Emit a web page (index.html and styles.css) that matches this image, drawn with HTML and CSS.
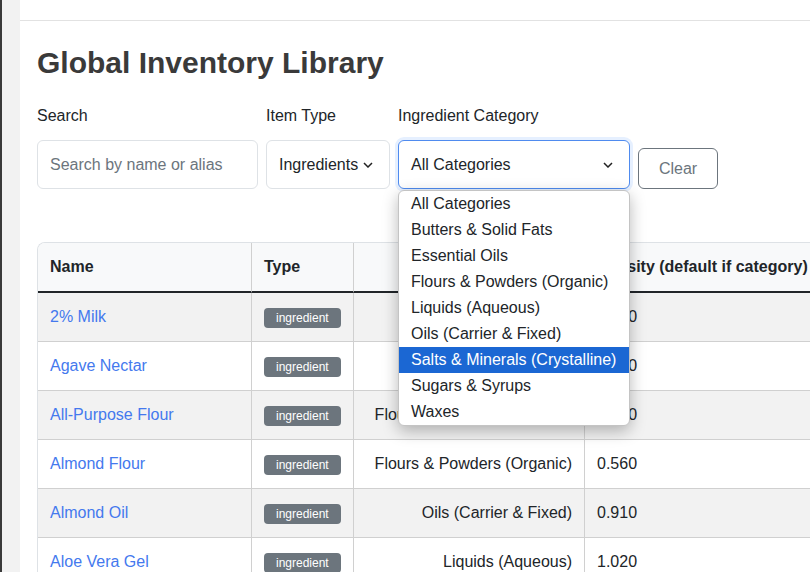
FILE: index.html
```html
<!DOCTYPE html>
<html lang="en">
<head>
<meta charset="utf-8">
<title>Global Inventory Library</title>
<link rel="stylesheet" href="styles.css">
</head>
<body>
<div class="app">
  <aside class="rail"></aside>
  <div class="main">
    <div class="topbar"></div>
    <div class="content">
      <h1 class="title">Global Inventory Library</h1>
      <div class="filters">
        <div class="field">
          <label class="label">Search</label>
          <input class="input" type="text" placeholder="Search by name or alias">
        </div>
        <div class="field">
          <label class="label">Item Type</label>
          <div class="select select-type">
            <span>Ingredients</span>
            <svg class="chev" width="10" height="6" viewBox="0 0 10 6"><path d="M1 1l4 4 4-4" fill="none" stroke="#222" stroke-width="1.5"/></svg>
          </div>
        </div>
        <div class="field">
          <label class="label">Ingredient Category</label>
          <div class="select-wrap">
            <div class="select select-cat">
              <span>All Categories</span>
              <svg class="chev" width="10" height="6" viewBox="0 0 10 6"><path d="M1 1l4 4 4-4" fill="none" stroke="#222" stroke-width="1.5"/></svg>
            </div>
            <ul class="dropdown">
              <li class="opt">All Categories</li>
              <li class="opt">Butters &amp; Solid Fats</li>
              <li class="opt">Essential Oils</li>
              <li class="opt">Flours &amp; Powders (Organic)</li>
              <li class="opt">Liquids (Aqueous)</li>
              <li class="opt">Oils (Carrier &amp; Fixed)</li>
              <li class="opt opt-active">Salts &amp; Minerals (Crystalline)</li>
              <li class="opt">Sugars &amp; Syrups</li>
              <li class="opt">Waxes</li>
            </ul>
          </div>
        </div>
        <button class="btn-clear" type="button">Clear</button>
      </div>

      <div class="table-wrap">
        <table class="table">
          <thead>
            <tr>
              <th class="col-name">Name</th>
              <th class="col-type">Type</th>
              <th class="col-cat">Category</th>
              <th class="col-dens">Density (default if category)</th>
            </tr>
          </thead>
          <tbody>
            <tr>
              <td><a class="link" href="#">2% Milk</a></td>
              <td><span class="badge">ingredient</span></td>
              <td class="cat">Liquids (Aqueous)</td>
              <td>1.030</td>
            </tr>
            <tr>
              <td><a class="link" href="#">Agave Nectar</a></td>
              <td><span class="badge">ingredient</span></td>
              <td class="cat">Sugars &amp; Syrups</td>
              <td>1.370</td>
            </tr>
            <tr>
              <td><a class="link" href="#">All-Purpose Flour</a></td>
              <td><span class="badge">ingredient</span></td>
              <td class="cat">Flours &amp; Powders (Organic)</td>
              <td>0.590</td>
            </tr>
            <tr>
              <td><a class="link" href="#">Almond Flour</a></td>
              <td><span class="badge">ingredient</span></td>
              <td class="cat">Flours &amp; Powders (Organic)</td>
              <td>0.560</td>
            </tr>
            <tr>
              <td><a class="link" href="#">Almond Oil</a></td>
              <td><span class="badge">ingredient</span></td>
              <td class="cat">Oils (Carrier &amp; Fixed)</td>
              <td>0.910</td>
            </tr>
            <tr>
              <td><a class="link" href="#">Aloe Vera Gel</a></td>
              <td><span class="badge">ingredient</span></td>
              <td class="cat">Liquids (Aqueous)</td>
              <td>1.020</td>
            </tr>
          </tbody>
        </table>
      </div>
    </div>
  </div>
</div>
</body>
</html>
```

FILE: styles.css
```css
html, body {
  margin: 0;
  height: 100%;
  overflow: hidden;
}

body {
  font-family: "Liberation Sans", Arial, sans-serif;
  font-size: 16px;
  color: #212529;
  background: #fff;
}

.app {
  display: flex;
  height: 572px;
}

.rail {
  flex: none;
  width: 18px;
  border-left: 2px solid #3a3a3a;
  background: #f2f2f2;
}

.main {
  flex: 1;
  min-width: 0;
}

.topbar {
  height: 20px;
  border-bottom: 1px solid #e2e2e2;
}

.content {
  padding: 24px 0 0 17px;
}

.title {
  margin: 0 0 23px;
  font-size: 30px;
  line-height: 36px;
  font-weight: 700;
  color: #3a3a3a;
}

.filters {
  display: flex;
  align-items: flex-end;
  gap: 8px;
}

.field {
  display: flex;
  flex-direction: column;
}

.label {
  line-height: 24px;
  margin-bottom: 12px;
  color: #212529;
}

.input {
  box-sizing: border-box;
  width: 221px;
  height: 49px;
  margin: 0;
  padding: 0 12px;
  border: 1px solid #dee2e6;
  border-radius: 6px;
  font: inherit;
  color: #212529;
  outline: none;
}

.input::placeholder {
  color: #6c757d;
}

.select {
  box-sizing: border-box;
  display: flex;
  align-items: center;
  justify-content: space-between;
  height: 49px;
  padding: 0 16px 0 12px;
  border: 1px solid #dee2e6;
  border-radius: 6px;
  background: #fff;
  color: #212529;
}

.select-type {
  width: 124px;
}

.select-wrap {
  position: relative;
}

.select-cat {
  width: 232px;
  border-color: #4f8bef;
  box-shadow: 0 0 0 3px rgba(13, 110, 253, 0.1);
}

.chev {
  flex: none;
  display: block;
}

.dropdown {
  position: absolute;
  z-index: 10;
  top: calc(100% + 1px);
  left: 0;
  box-sizing: border-box;
  width: 232px;
  margin: 0;
  padding: 0;
  list-style: none;
  background: #fff;
  border: 1px solid #c4c4c4;
  border-radius: 6px;
  overflow: hidden;
  box-shadow: 0 5px 16px rgba(0, 0, 0, 0.28);
}

.opt {
  height: 26px;
  line-height: 26px;
  padding-left: 12px;
  white-space: nowrap;
  color: #212529;
}

.opt-active {
  background: #1b67d3;
  color: #fff;
}

.btn-clear {
  box-sizing: border-box;
  width: 80px;
  height: 41px;
  margin: 0;
  padding: 0;
  border: 1px solid #6c757d;
  border-radius: 6px;
  background: #fff;
  color: #6c757d;
  font: inherit;
}

.table-wrap {
  margin-top: 53px;
  width: 1000px;
  border: 1px solid #dee2e6;
  border-right: none;
  border-bottom: none;
  border-radius: 8px 0 0 0;
  overflow: hidden;
}

.table {
  width: 100%;
  table-layout: fixed;
  border-collapse: separate;
  border-spacing: 0;
}

.table th,
.table td {
  box-sizing: border-box;
  padding: 12px;
  line-height: 24px;
  text-align: left;
  white-space: nowrap;
  border-right: 1px solid #d0d0d0;
}

.table th {
  background: #f8f9fa;
  font-weight: 700;
  color: #212529;
  border-bottom: 2px solid #212529;
}

.table td {
  border-bottom: 1px solid #d0d0d0;
}

.table tbody tr:nth-child(odd) td {
  background: #f2f2f2;
}

.col-name { width: 214px; }
.col-type { width: 102px; }
.col-cat { width: 231px; }

.table th.col-cat,
.table td.cat {
  text-align: right;
}

.link {
  color: #4479ee;
  text-decoration: none;
}

.badge {
  display: inline-block;
  padding: 4px 12px;
  font-size: 12px;
  line-height: 12px;
  color: #fff;
  background: #6c757d;
  border-radius: 4px;
}
```
